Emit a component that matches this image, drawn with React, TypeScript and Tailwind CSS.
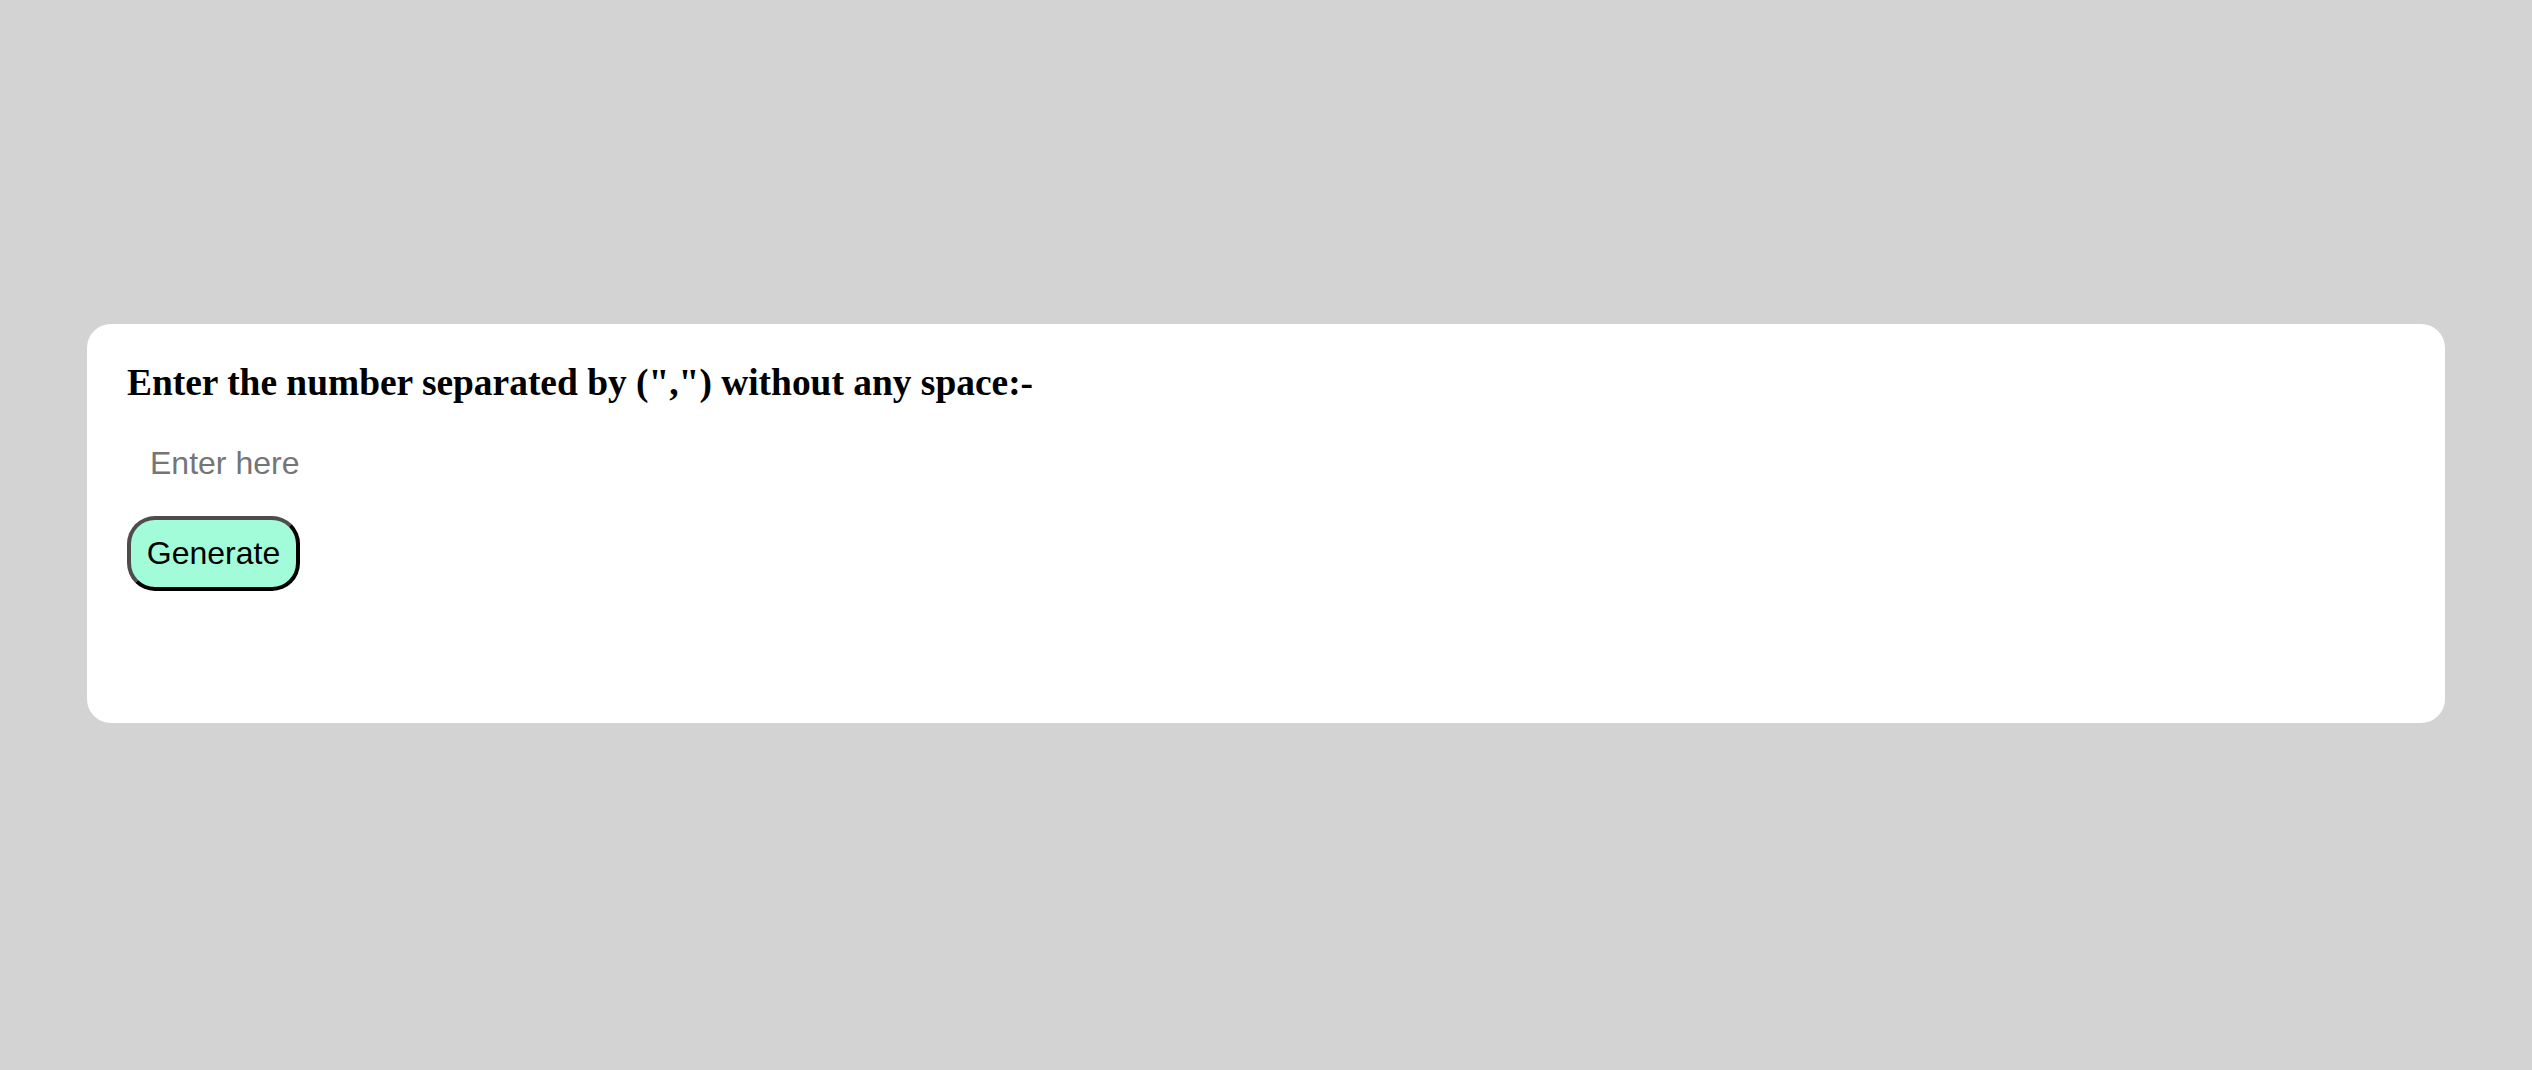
import { useState } from "react";

export default function App() {
  const [value, setValue] = useState("");

  return (
    <div className="min-h-screen w-full bg-[#d3d3d3] px-[87px] pt-[324px]">
      <div className="h-[399px] w-full rounded-[24px] bg-white px-[40px]">
        {/* Prompt */}
        <h3 className="pt-[37.5px] font-['Liberation_Serif',serif] text-[37.44px] font-bold leading-[41px] text-black">
          Enter the number separated by (",") without any space:-
        </h3>

        {/* Input */}
        <input
          type="text"
          value={value}
          onChange={(e) => setValue(e.target.value)}
          placeholder="Enter here"
          className="mt-[42px] block h-[36px] w-[420px] bg-white pl-[23px] font-['Liberation_Sans',Arial,sans-serif] text-[32px] leading-[36px] text-black outline-none placeholder:text-[#757575]"
        />

        {/* Button */}
        <button
          type="button"
          className="mt-[35.5px] flex h-[75px] w-[173px] items-center justify-center rounded-[28px] border-4 border-t-[#4d4d4d] border-l-[#4d4d4d] border-r-black border-b-black bg-[#a3fcd9] pb-[1px] font-['Liberation_Sans',Arial,sans-serif] text-[32px] leading-none text-black"
        >
          Generate
        </button>
      </div>
    </div>
  );
}
